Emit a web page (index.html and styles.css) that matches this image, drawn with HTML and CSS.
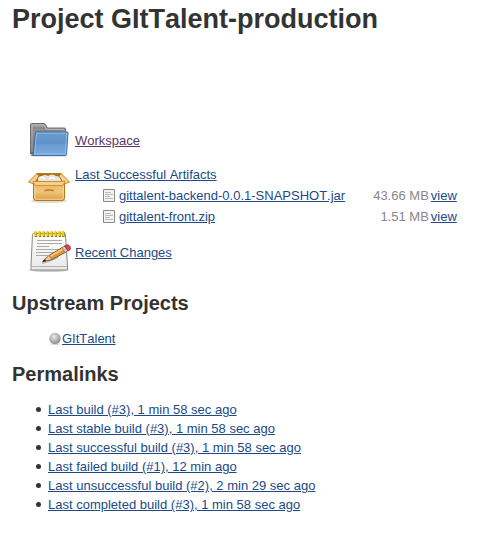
FILE: index.html
```html
<!DOCTYPE html>
<html lang="en">
<head>
<meta charset="utf-8">
<title>GItTalent-production</title>
<link rel="stylesheet" href="styles.css">
</head>
<body>
<main class="panel">
  <h1>Project GItTalent-production</h1>

  <section class="summary">
    <div class="entry entry-workspace">
      <svg class="icon" viewBox="0 0 48 48" aria-hidden="true">
        <defs>
          <linearGradient id="gray" x1="0" y1="0" x2="0" y2="1"><stop offset="0" stop-color="#a2a2a2"/><stop offset="1" stop-color="#626262"/></linearGradient>
          <linearGradient id="blue" x1="0" y1="0" x2="0" y2="1"><stop offset="0" stop-color="#6a9bd0"/><stop offset=".5" stop-color="#6091c8"/><stop offset=".55" stop-color="#6c9dd2"/><stop offset="1" stop-color="#7aaadd"/></linearGradient>
        </defs>
        <ellipse cx="25" cy="40" rx="19" ry="1.500" fill="#e4e4e4"/>
        <path d="M5.500 38V8.500q0-1 1-1H19q1 0 1.500 1l2 3.500h17q1 0 1 1V38z" fill="url(#gray)" stroke="#6c6c6c"/>
        <path d="M7 36V9h12l2.500 4.500H39" fill="none" stroke="#bdbdbd" stroke-width=".8"/>
        <path d="M8 12h12M8 15h30" stroke="#777" stroke-width=".8"/>
        <path d="M10.500 17q.1-1 1-1H42q1.200 0 1 1L41.500 38.500q-.1 1-1.200 1H6.500q1.800-.3 2-2z" fill="url(#blue)" stroke="#3f6fab"/>
        <path d="M11.500 17.200H41.700L40.400 38H9.500z" fill="none" stroke="#9fc3e9" stroke-width=".8"/>
      </svg>
      <a class="visited" href="#workspace">Workspace</a>
    </div>

    <div class="entry entry-artifacts">
      <svg class="icon" viewBox="0 0 48 48" aria-hidden="true">
        <defs>
          <linearGradient id="box" x1="0" y1="0" x2="0" y2="1"><stop offset="0" stop-color="#e8b262"/><stop offset=".55" stop-color="#f1c47c"/><stop offset="1" stop-color="#d99a3d"/></linearGradient>
        </defs>
        <ellipse cx="24" cy="37" rx="18" ry="2" fill="#ddd"/>
        <path d="M12 9.500H36L40 19H8z" fill="#a8701d" stroke="#bd7611"/>
        <path d="M13 17q-1-5 4-5 3-2 6 0 4-3 8 0 5 0 5 5z" fill="#e6e4df"/>
        <path d="M15 14q3-2 5 1M24 15q3-3 6 0" fill="none" stroke="#fff" stroke-width="1.500"/>
        <path d="M8.500 17.500h31V34q0 2.500-2.500 2.500H11q-2.500 0-2.500-2.500z" fill="url(#box)" stroke="#bd7611"/>
        <path d="M9.800 20v14q0 1.200 1.200 1.200h26q1.200 0 1.200-1.200V20" fill="none" stroke="#f8dba6" stroke-width=".9"/>
        <path d="M12 9.500L3.500 18l5.500 2 5-8zM36 9.500l8.500 8.500-5.500 2-5-8z" fill="#f4cf91" stroke="#c17d11" stroke-width=".9"/>
        <path d="M8 17.500h32l-2 4H10z" fill="#f6cf8d" stroke="#c98924" stroke-width=".8"/>
        <path d="M20 26.500q4-1 8 0" fill="none" stroke="#b97b22" stroke-width="1.600" stroke-linecap="round"/>
      </svg>
      <div class="artifacts">
        <a href="#artifacts">Last Successful Artifacts</a>
        <table class="files">
          <tr>
            <td><svg class="doc" viewBox="0 0 16 16" aria-hidden="true"><path d="M2.500 2.500h11v12h-11z" fill="#f3f3f3" stroke="#888"/><path d="M4 5.500h6M4 7.500h8M4 9.500h5M4 11.500h8" stroke="#bbb"/></svg><a href="#jar">gittalent-backend-0.0.1-SNAPSHOT.jar</a></td>
            <td class="size">43.66 MB</td>
            <td><a href="#view-jar">view</a></td>
          </tr>
          <tr>
            <td><svg class="doc" viewBox="0 0 16 16" aria-hidden="true"><path d="M2.500 2.500h11v12h-11z" fill="#f3f3f3" stroke="#888"/><path d="M4 5.500h6M4 7.500h8M4 9.500h5M4 11.500h8" stroke="#bbb"/></svg><a href="#zip">gittalent-front.zip</a></td>
            <td class="size">1.51 MB</td>
            <td><a href="#view-zip">view</a></td>
          </tr>
        </table>
      </div>
    </div>

    <div class="entry entry-changes">
      <svg class="icon" viewBox="0 0 48 48" aria-hidden="true">
        <defs>
          <linearGradient id="paper" x1="0" y1="0" x2="0" y2="1"><stop offset="0" stop-color="#fff"/><stop offset="1" stop-color="#e8e8e6"/></linearGradient>
        </defs>
        <ellipse cx="24" cy="42" rx="20" ry="2" fill="#ccc"/>
        <path d="M8.500 5.500h31q1 0 1 1L42.500 38v3q0 1-1 1H7q-1 0-1-1v-3L7.500 6.500q0-1 1-1z" fill="url(#paper)" stroke="#888a85"/>
        <path d="M6.500 38.500H42" stroke="#b5b5b2"/>
        <path d="M12 12.500h25M12 15.500h25M12 18.500h12M11 21.500h23M11 24.500h19M11 27.500h12" stroke="#aaa"/>
        <path d="M11 4v5M15 4v5M19 4v5M23 4v5M27 4v5M31 4v5M35 4v5M38.500 4v5" stroke="#8c7800" stroke-width="2.400"/>
        <path d="M10.500 3v5M14.500 3v5M18.500 3v5M22.500 3v5M26.500 3v5M30.500 3v5M34.500 3v5M38 3v5" stroke="#e8cc25" stroke-width="2.200"/>
        <path d="M17 35q5-1 16-6" fill="none" stroke="#b9b9b7" stroke-width="2"/>
        <path d="M18 33.500l6-6L38 19l3 5L27 31.500z" fill="#dd973c" stroke="#80501a" stroke-width=".9"/>
        <path d="M24.500 27.800L38 19.800l1 1.700-13.500 7.800z" fill="#f7c273"/>
        <path d="M18 33.500l6-6 3 4z" fill="#edcfa0" stroke="#8c6233" stroke-width=".7"/>
        <path d="M17 34l2.700-2.700 1.500 1.700z" fill="#222"/>
        <path d="M37 19.500l3-1.700 3 5-3 1.800z" fill="#c7c9c4" stroke="#777" stroke-width=".7"/>
        <path d="M39.500 18q4-2.500 5.500.5t-1.800 4.500z" fill="#dc4940" stroke="#a32019" stroke-width=".8"/>
      </svg>
      <a href="#changes">Recent Changes</a>
    </div>
  </section>

  <h2>Upstream Projects</h2>
  <ul class="upstream">
    <li>
      <svg class="ball" viewBox="0 0 14 14" aria-hidden="true">
        <defs><radialGradient id="ball" cx=".42" cy=".35" r=".6"><stop offset="0" stop-color="#ececec"/><stop offset=".5" stop-color="#bdbdbd"/><stop offset="1" stop-color="#949494"/></radialGradient></defs>
        <ellipse cx="7" cy="12" rx="5" ry="1" fill="#ddd"/>
        <circle cx="7" cy="6.500" r="5.700" fill="url(#ball)"/>
      </svg><a href="#gittalent">GItTalent</a>
    </li>
  </ul>

  <h2>Permalinks</h2>
  <ul class="permalinks">
    <li><a href="#last">Last build (#3), 1 min 58 sec ago</a></li>
    <li><a href="#stable">Last stable build (#3), 1 min 58 sec ago</a></li>
    <li><a href="#successful">Last successful build (#3), 1 min 58 sec ago</a></li>
    <li><a href="#failed">Last failed build (#1), 12 min ago</a></li>
    <li><a href="#unsuccessful">Last unsuccessful build (#2), 2 min 29 sec ago</a></li>
    <li><a href="#completed">Last completed build (#3), 1 min 58 sec ago</a></li>
  </ul>
</main>
</body>
</html>
```
FILE: styles.css
```css
body {
  margin: 0;
  background: #fff;
  color: #333;
  font: 13px/19px "Liberation Sans", Arial, sans-serif;
  font-kerning: none;
}

.panel {
  padding: 3px 12px 16px;
}

a {
  color: #204a87;
}

a.visited {
  color: #5c3566;
}

h1 {
  margin: 0;
  font-size: 27px;
  line-height: 32px;
}

h2 {
  margin: 0;
  font-size: 20px;
  line-height: 24px;
}

.summary {
  margin: 81px 0 15px;
  padding-left: 13px;
}

.entry {
  display: flex;
  align-items: center;
  gap: 2px;
}

.icon {
  flex: none;
  width: 48px;
  height: 48px;
}

.entry-artifacts {
  align-items: flex-start;
}

.artifacts {
  padding: 1px 0;
}

.files {
  margin: 1px 0 0 24px;
  border-collapse: collapse;
}

.files td {
  height: 21px;
  padding: 0 0 0 2px;
  white-space: nowrap;
}

.files .size {
  padding-left: 28px;
  color: #888;
  text-align: right;
}

.doc {
  width: 16px;
  height: 16px;
  margin-right: 2px;
  vertical-align: -3px;
}

.ball {
  width: 14px;
  height: 14px;
  vertical-align: -3px;
}

ul {
  margin: 14px 0;
  list-style: none;
}

.upstream {
  padding-left: 36px;
}

.permalinks {
  padding-left: 24px;
}

.permalinks li {
  display: flex;
  align-items: center;
  gap: 7px;
}

.permalinks li::before {
  content: "";
  width: 5px;
  height: 5px;
  border-radius: 50%;
  background: #333;
}
```
